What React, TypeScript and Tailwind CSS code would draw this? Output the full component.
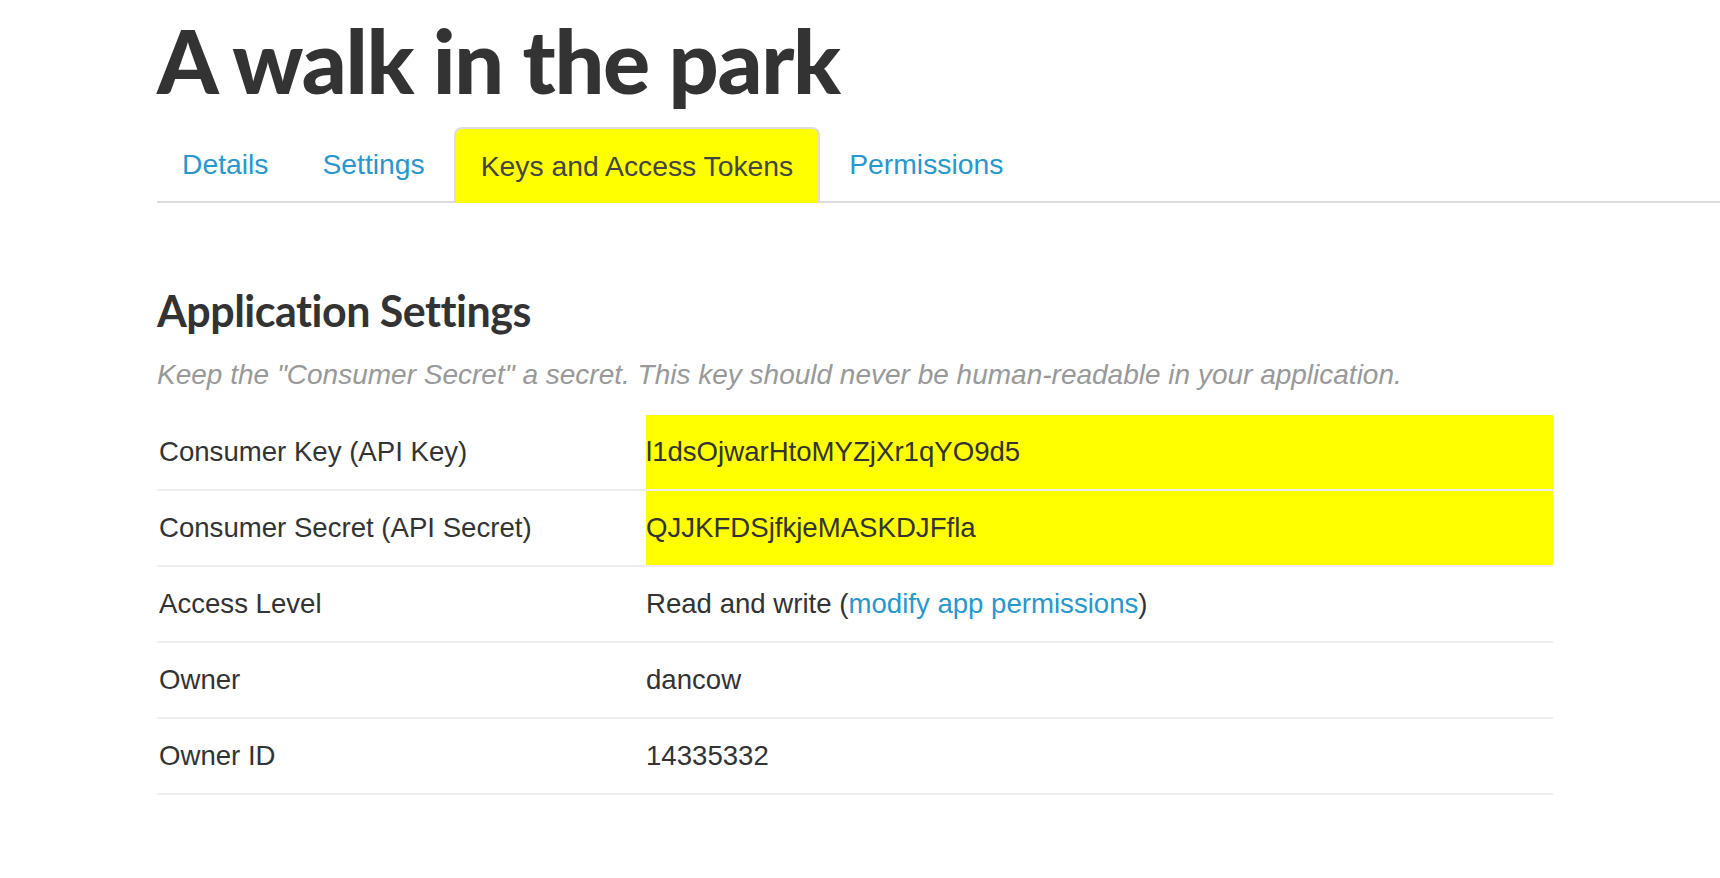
const tabs = ["Details", "Settings", "Keys and Access Tokens", "Permissions"];

function Row({ label, children, hl }: any) {
  return (
    <div className="flex border-b-2 border-[#eeeeee] h-[76px] items-center">
      <div className="w-[489px] pl-[2px]">{label}</div>
      <div className={"flex-1 h-full flex items-center " + (hl ? "bg-[#ffff00]" : "")}>{children}</div>
    </div>
  );
}

export default function App() {
  return (
    <div className="min-h-screen bg-white text-[#333333] font-['Liberation_Sans',Arial,sans-serif] overflow-hidden">
      <div className="pl-[157px]">
        <h1 className="font-['Lato',sans-serif] font-black text-[88px] leading-none pt-[16px] tracking-[-1.3px] text-[#333333]">
          A walk in the park
        </h1>
        <div className="flex items-end mt-[25px] border-b-2 border-[#dddddd] h-[74px]">
          {tabs.map((t, i) =>
            i === 2 ? (
              <div
                key={t}
                className="h-[76px] -mb-[2px] px-[25px] mr-[4px] flex items-center text-[28.3px] text-[#444444] bg-[#ffff00] border-2 border-b-0 border-[#dddddd] rounded-t-[8px]"
              >
                {t}
              </div>
            ) : (
              <div key={t} className="h-[74px] px-[25px] mr-[4px] flex items-center text-[28.3px] text-[#2897cc]">
                {t}
              </div>
            )
          )}
        </div>
        <h2 className="font-['Lato',sans-serif] font-bold text-[43px] leading-none mt-[86px] tracking-[-0.5px] text-[#333333]">
          Application Settings
        </h2>
        <p className="italic text-[28px] text-[#999999] mt-[29px] leading-none">
          Keep the "Consumer Secret" a secret. This key should never be human-readable in your application.
        </p>
        <div className="w-[1396px] mt-[26px] text-[27.6px]">
          <Row label="Consumer Key (API Key)" hl>l1dsOjwarHtoMYZjXr1qYO9d5</Row>
          <Row label="Consumer Secret (API Secret)" hl>QJJKFDSjfkjeMASKDJFfla</Row>
          <Row label="Access Level">
            <span>
              Read and write (<span className="text-[#2897cc]">modify app permissions</span>)
            </span>
          </Row>
          <Row label="Owner">dancow</Row>
          <Row label="Owner ID">14335332</Row>
        </div>
      </div>
    </div>
  );
}
